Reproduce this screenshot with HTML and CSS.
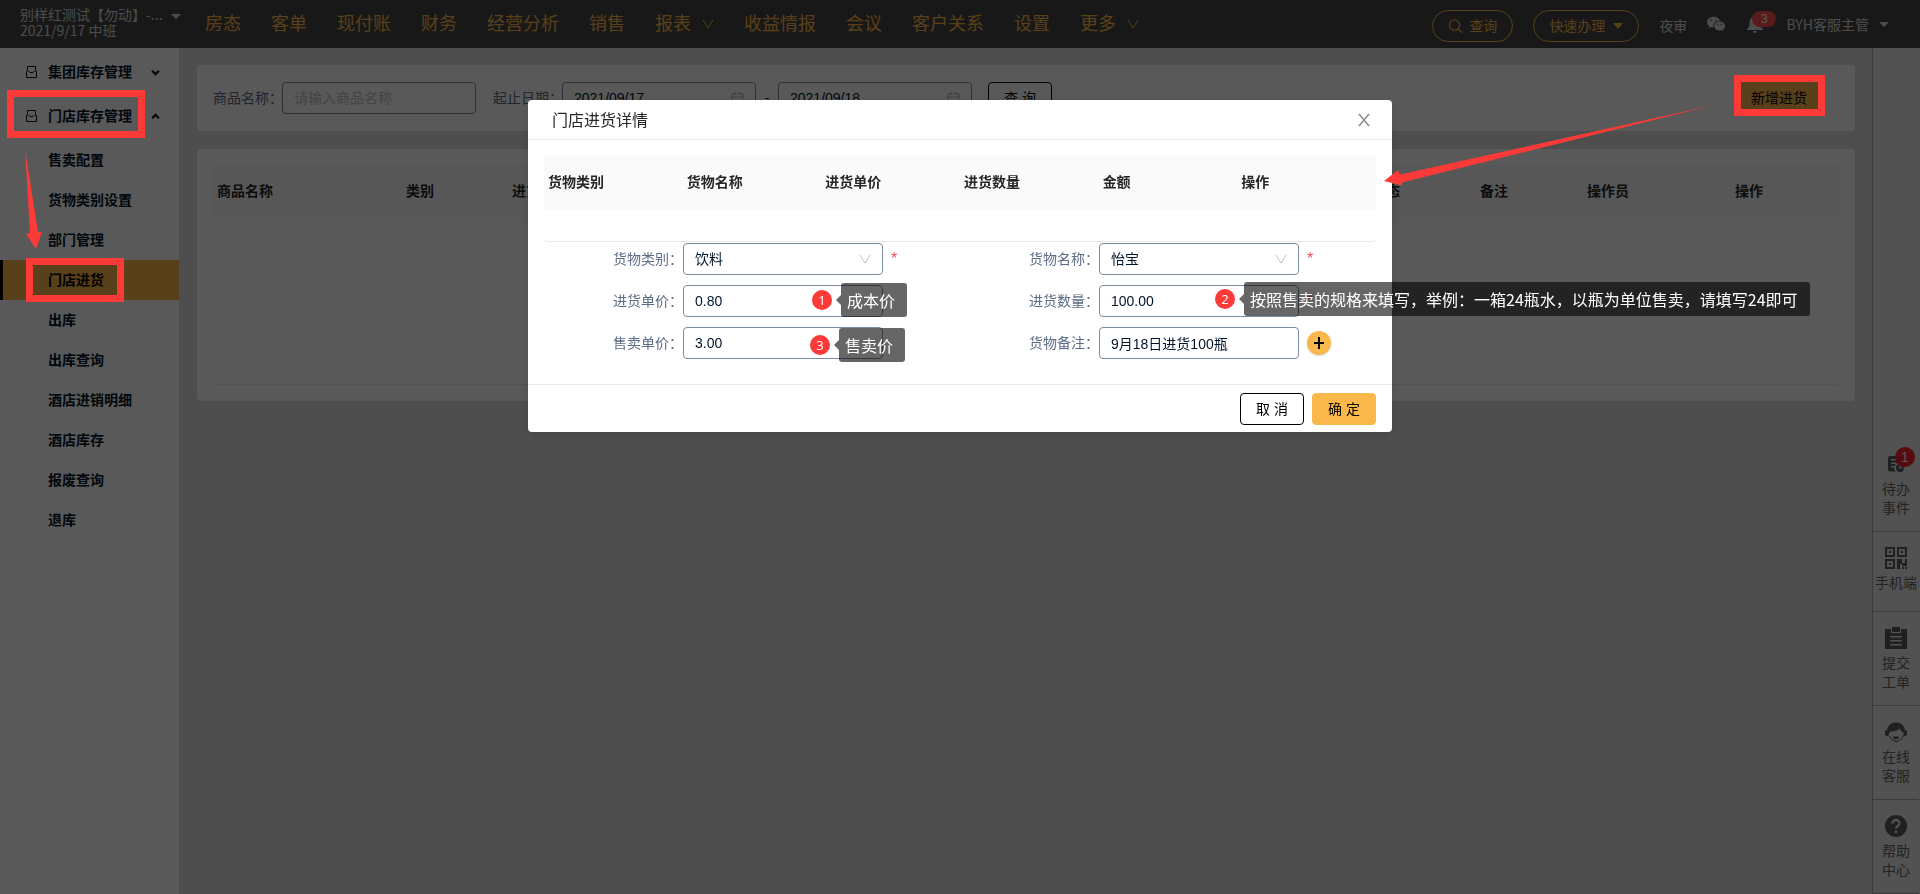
FILE: index.html
```html
<!DOCTYPE html>
<html lang="zh-CN">
<head>
<meta charset="utf-8">
<title>门店进货</title>
<link rel="stylesheet" href="styles.css">
</head>
<body>
<div class="app">
  <header class="topbar">
    <div class="hotel">
      <div class="hotel-text"><span>别样红测试【勿动】-...</span><span>2021/9/17 中班</span></div>
      <i class="caret"></i>
    </div>
    <nav class="nav">
      <a href="#">房态</a><a href="#">客单</a><a href="#">现付账</a><a href="#">财务</a><a href="#">经营分析</a><a href="#">销售</a>
      <a href="#">报表<svg class="nav-chev" viewBox="0 0 12 12"><path d="M1 2l5 8 5-8"/></svg></a>
      <a href="#">收益情报</a><a href="#">会议</a><a href="#">客户关系</a><a href="#">设置</a>
      <a href="#">更多<svg class="nav-chev" viewBox="0 0 12 12"><path d="M1 2l5 8 5-8"/></svg></a>
    </nav>
    <div class="tools">
      <button class="pill"><svg class="search" viewBox="0 0 16 16"><circle cx="7" cy="7" r="5.5"/><path d="M11 11l4 4"/></svg>查询</button>
      <button class="pill">快速办理<i class="caret gold"></i></button>
      <a class="audit" href="#">夜审</a>
      <svg class="wechat" viewBox="0 0 20 16"><path fill-rule="evenodd" d="M7.3 0C3.2 0 0 2.700 0 6c0 1.900 1 3.500 2.600 4.600L2 12.600l2.400-1.200c.8.2 1.800.4 2.800.4-.9-3.800 2.300-7.400 7-7.400C13.500 1.800 10.700 0 7.300 0zM4.900 4.800a.9.9 0 110-1.800.9.9 0 010 1.800zm4.900 0a.9.9 0 110-1.800.9.9 0 010 1.800z"/><path fill-rule="evenodd" d="M14 5.300c-3.300 0-6 2.200-6 5s2.700 5 6 5c.7 0 1.400-.1 2-.3l2 1-.5-1.700c1.500-.9 2.500-2.300 2.500-4 0-2.800-2.700-5-6-5zm-2 4a.8.8 0 110-1.600.8.8 0 010 1.600zm4 0a.8.8 0 110-1.600.8.8 0 010 1.600z"/></svg>
      <div class="bell-wrap">
        <svg class="bell" viewBox="0 0 16 18"><path d="M8 0a1.500 1.500 0 00-1.500 1.700C4 2.300 2.500 4.500 2.500 7v4.500L0 14v1h16v-1l-2.500-2.500V7c0-2.500-1.500-4.700-4-5.300A1.500 1.500 0 008 0zM6 16a2 2 0 004 0z"/></svg>
        <span class="bell-count">3</span>
      </div>
      <div class="user">BYH客服主管<i class="caret"></i></div>
    </div>
  </header>

  <div class="body">
    <aside class="side">
      <a class="group" href="#"><svg class="box-ico" viewBox="0 0 11 12"><path d="M.5 5.500v6h10v-6M1.500 5.500v-5h8v5M.5 5.500L2 4M10.500 5.500L9 4M2.500 5l1.500 1.500h3L8.500 5"/></svg><span>集团库存管理</span><svg class="side-chev" viewBox="0 0 8 8"><path d="M1 2.500l3 3 3-3"/></svg></a>
      <a class="group" href="#"><svg class="box-ico" viewBox="0 0 11 12"><path d="M.5 5.500v6h10v-6M1.500 5.500v-5h8v5M.5 5.500L2 4M10.500 5.500L9 4M2.500 5l1.500 1.500h3L8.500 5"/></svg><span>门店库存管理</span><svg class="side-chev" viewBox="0 0 8 8"><path d="M1 5.500l3-3 3 3"/></svg></a>
      <div class="subs">
        <a href="#">售卖配置</a><a href="#">货物类别设置</a><a href="#">部门管理</a><a href="#" class="active">门店进货</a><a href="#">出库</a><a href="#">出库查询</a><a href="#">酒店进销明细</a><a href="#">酒店库存</a><a href="#">报废查询</a><a href="#">退库</a>
      </div>
    </aside>

    <main class="main">
      <section class="panel filter">
        <label for="goods">商品名称：</label>
        <input id="goods" class="field" placeholder="请输入商品名称">
        <label class="next" for="from">起止日期：</label>
        <div class="date"><input id="from" class="field" value="2021/09/17"><svg viewBox="0 0 14 14"><path d="M1 2.500h12v10.500H1zM1 6h12M4 .5v3.500M10 .5v3.500"/></svg></div>
        <span class="dash">-</span>
        <div class="date"><input aria-label="结束日期" class="field" value="2021/09/18"><svg viewBox="0 0 14 14"><path d="M1 2.500h12v10.500H1zM1 6h12M4 .5v3.500M10 .5v3.500"/></svg></div>
        <button class="btn query">查 询</button>
        <button class="btn primary add">新增进货</button>
      </section>
      <section class="panel">
        <div class="table-box tall">
          <table class="grid stock">
            <thead><tr><th>商品名称</th><th>类别</th><th>进货单价</th><th>状态</th><th>备注</th><th>操作员</th><th>操作</th></tr></thead>
          </table>
        </div>
      </section>
    </main>

    <aside class="rail">
      <a href="#" class="todo"><span class="ico-wrap"><svg class="small" viewBox="0 0 16 16"><path fill-rule="evenodd" d="M2 0h9a2 2 0 012 2v5a5 5 0 00-5 8.500H2a2 2 0 01-2-2V2a2 2 0 012-2zm1 3v1.500h6V3zm0 3.500V8h5V6.500zM3 10v1.500h3V10z"/><path fill-rule="evenodd" d="M12 8a4 4 0 110 8 4 4 0 010-8zm-.7 1.500v3h3v-1.200h-1.800V9.500z"/></svg><span class="rail-count">1</span></span>待办<br>事件</a>
      <a href="#"><span class="ico-wrap"><svg viewBox="0 0 22 22"><path fill-rule="evenodd" d="M0 0h10v10H0zm2 2v6h6V2zM12 0h10v10H12zm2 2v6h6V2zM0 12h10v10H0zm2 2v6h6v-6zM4 4h2v2H4zM16 4h2v2h-2zM4 16h2v2H4zM12 12h5v4h3v-4h2v7h-5v-2h-2v5h-3zM17 20h2v2h-2zM20 20h2v2h-2z"/></svg></span>手机端</a>
      <a href="#"><span class="ico-wrap"><svg viewBox="0 0 22 22"><path fill-rule="evenodd" d="M0 2h6v4h10V2h6v20H0zm5 7v1.500h12V9zm0 4v1.500h12V13zm0 4v1.500h12V17zM7 0h8v5H7z"/></svg></span>提交<br>工单</a>
      <a href="#"><span class="ico-wrap"><svg viewBox="0 0 22 22"><path d="M11 1.500A8.500 8.500 0 002.500 9H2a2 2 0 00-2 2v2a2 2 0 002 2h1.500c0-2.500 1-4 2.500-4.500 3.500 0 7-1 9-3 .5 2 1.500 3 3.500 4V15H20a2 2 0 002-2v-2a2 2 0 00-2-2h-.5A8.500 8.500 0 0011 1.500z"/><path class="line" d="M2.500 8a9 9 0 0117 0M4.500 15a7 7 0 005.500 5M18.500 14.500a8 8 0 01-5.500 5.500M9 20.500h4"/><path d="M8 15.500h6a3 3 0 01-6 0z"/></svg></span>在线<br>客服</a>
      <a href="#"><span class="ico-wrap"><svg viewBox="0 0 22 22"><circle cx="11" cy="11" r="11"/><path class="mark" d="M7.500 8.500a3.500 3.500 0 117 0c0 2.500-3.500 2.500-3.500 5M11 15.500v2.500"/></svg></span>帮助<br>中心</a>
    </aside>
  </div>
</div>

<div class="mask">
  <div class="modal" role="dialog" aria-label="门店进货详情">
    <div class="modal-head"><h2>门店进货详情</h2><button class="close" aria-label="关闭"><svg viewBox="0 0 12 14"><path d="M1 1l10 12M11 1L1 13"/></svg></button></div>
    <div class="modal-body">
      <div class="table-box">
        <table class="grid">
          <thead><tr><th>货物类别</th><th>货物名称</th><th>进货单价</th><th>进货数量</th><th>金额</th><th>操作</th></tr></thead>
        </table>
      </div>
      <form class="form">
        <div class="row"><label for="cat">货物类别：</label><div class="select"><select id="cat" class="field"><option>饮料</option></select><svg viewBox="0 0 12 10"><path d="M1 1l5 8 5-8"/></svg></div><span class="star">*</span></div>
        <div class="row"><label for="name">货物名称：</label><div class="select"><select id="name" class="field"><option>怡宝</option></select><svg viewBox="0 0 12 10"><path d="M1 1l5 8 5-8"/></svg></div><span class="star">*</span></div>
        <div class="row"><label for="cost">进货单价：</label><input id="cost" class="field" value="0.80"></div>
        <div class="row"><label for="qty">进货数量：</label><input id="qty" class="field" value="100.00"><span class="star">*</span></div>
        <div class="row"><label for="price">售卖单价：</label><input id="price" class="field" value="3.00"></div>
        <div class="row"><label for="note">货物备注：</label><input id="note" class="field" value="9月18日进货100瓶"><button type="button" class="plus" aria-label="添加"><svg viewBox="0 0 10 12"><path d="M5 0v12M0 6h10"/></svg></button></div>
      </form>
    </div>
    <div class="modal-foot"><button class="btn">取 消</button><button class="btn primary">确 定</button></div>
  </div>
</div>

<div class="notes">
  <div class="frame frame-group"></div>
  <div class="frame frame-item"></div>
  <div class="frame frame-add"></div>
  <svg class="arrow arrow-down" viewBox="0 0 18 102"><path d="M1 0L14 83l4 0-6 17L2 85l4-1z"/></svg>
  <svg class="arrow arrow-left" viewBox="0 0 330 84"><path d="M330 2L18 79.500v3L0 78l14-11 2 4.500z"/></svg>
  <div class="note note-1"><b>1</b><span>成本价</span></div>
  <div class="note note-2"><b>2</b><span>按照售卖的规格来填写，举例：一箱24瓶水，以瓶为单位售卖，请填写24即可</span></div>
  <div class="note note-3"><b>3</b><span>售卖价</span></div>
</div>
</body>
</html>
```
FILE: styles.css
```css
* { box-sizing: border-box; }
body { margin: 0; font: 14px/20px "Liberation Sans", "Noto Sans CJK SC", sans-serif; color: #262626; background: #e0e0e0; overflow: hidden; }
a { color: inherit; text-decoration: none; }
button, input, select { font: inherit; color: inherit; }
svg { display: block; flex: none; }
.app { min-height: 100vh; display: flex; flex-direction: column; }

.topbar { height: 48px; background: #464646; display: flex; align-items: center; color: #d9d9d9; }
.hotel { width: 205px; padding: 0 0 4px 20px; display: flex; align-items: flex-start; gap: 6px; font-family: "Noto Sans CJK SC", sans-serif; line-height: 16px; white-space: nowrap; }
.hotel-text { display: flex; flex-direction: column; width: 145px; }
.caret { border: 5px solid transparent; border-top-color: currentColor; border-bottom: 0; flex: none; }
.hotel .caret { margin-top: 8px; }
.nav { display: flex; gap: 30px; flex: 1; font-size: 18px; line-height: 24px; color: #fbb84a; white-space: nowrap; }
.nav a { display: flex; align-items: center; }
.nav-chev { width: 12px; height: 12px; margin-left: 11px; fill: none; stroke: currentColor; }
.tools { display: flex; align-items: center; padding-right: 31px; white-space: nowrap; }
.pill { height: 32px; margin: 4px 20px 0 0; padding: 0 15px; border: 1px solid #fbb84a; border-radius: 16px; background: none; color: #fbb84a; display: flex; align-items: center; gap: 6px; }
.search { width: 15px; height: 16px; fill: none; stroke: currentColor; stroke-width: 1.3; }
.pill .gold { border-width: 6px 5px 0; margin-left: 2px; }
.audit { margin: 4px 20px 0 0; }
.wechat { width: 18px; height: 16px; fill: currentColor; margin-right: 22px; }
.bell-wrap { position: relative; width: 16px; margin-right: 23px; }
.bell { width: 16px; height: 18px; fill: currentColor; }
.bell-count { position: absolute; left: 5px; top: -4px; width: 24px; height: 16px; border-radius: 8px; background: #ff4d4f; color: #fff; font-size: 12px; line-height: 16px; text-align: center; }
.user { display: flex; align-items: center; gap: 10px; font-family: "Noto Sans CJK SC", sans-serif; }

.body { flex: 1; display: flex; }
.side { width: 179px; background: #fff; color: #001529; font-weight: 700; padding-top: 2px; }
.group { height: 44px; display: flex; align-items: center; padding-left: 26px; }
.box-ico { width: 11px; height: 12px; fill: none; stroke: currentColor; margin-right: 11px; }
.group span { width: 103px; }
.side-chev { width: 9px; height: 9px; fill: none; stroke: currentColor; stroke-width: 2; }
.subs { padding-top: 2px; }
.subs a { display: block; line-height: 40px; padding-left: 45px; border-left: 3px solid transparent; }
.subs .active { background: #fbb84a; border-color: #000; color: #000; }

.main { flex: 1; padding: 17px 17px 0 18px; display: flex; flex-direction: column; gap: 18px; }
.panel { background: #fff; border-radius: 4px; padding: 16px; }
.filter { display: flex; align-items: center; height: 66px; color: #5b6c84; white-space: nowrap; }
.filter label { width: 69px; }
.filter .next { margin-left: 17px; }
.field { width: 194px; height: 32px; border: 1px solid #7b8ba3; border-radius: 4px; background: #fff; color: #001529; padding: 0 11px; }
.field::placeholder { color: #bfbfbf; }
.date { position: relative; }
.date svg { position: absolute; right: 12px; top: 9px; width: 13px; height: 14px; fill: none; stroke: #aaa; }
.dash { width: 22px; text-align: center; color: #262626; }
.btn { height: 32px; width: 64px; padding: 0; border: 1px solid #000; border-radius: 4px; background: #fff; color: #000; text-align: center; }
.primary { background: #fbb84a; border-color: #fbb84a; }
.query { margin-left: 16px; }
.add { width: 88px; margin: 0 16px 0 auto; }
.table-box { height: 86px; border-bottom: 1px solid #e8e8e8; border-radius: 4px; }
.tall { height: 220px; }
.grid { width: 100%; border-spacing: 0; table-layout: fixed; }
.grid th { height: 53px; padding: 0 4px 1px; text-align: left; background: #fafafa; }
.stock th:nth-child(1) { width: 12%; }
.stock th { width: 7%; }
.stock th:nth-child(1) { width: 189px; }
.stock th:nth-child(2) { width: 106px; }
.stock th:nth-child(3) { width: auto; }
.stock th:nth-child(4) { width: 108px; }
.stock th:nth-child(5) { width: 107px; }
.stock th:nth-child(6) { width: 148px; }
.stock th:nth-child(7) { width: 108px; }

.rail { width: 48px; padding-right: 1px; border-left: 1px solid #aaa; background: #eaeaea; color: #666; display: flex; flex-direction: column; justify-content: flex-end; text-align: center; line-height: 19px; }
.rail a { height: 94px; padding-top: 15px; border-bottom: 1px solid #aaa; white-space: nowrap; }
.rail a:nth-child(2) { height: 80px; }
.ico-wrap { position: relative; display: flex; width: 22px; height: 22px; margin: 0 auto 5px; align-items: center; justify-content: center; }
.rail svg { width: 22px; height: 22px; fill: #5c5c5c; }
.rail .small { width: 16px; height: 16px; }
.rail .line { fill: none; stroke: #5c5c5c; }
.rail .mark { fill: none; stroke: #eaeaea; stroke-width: 2.4; }
.rail-count { position: absolute; left: 10px; top: -6px; width: 20px; height: 20px; border-radius: 10px; background: #f5222d; color: #fff; line-height: 20px; }

.mask { position: fixed; inset: 0; background: rgba(0, 0, 0, .65); padding-top: 100px; }
.modal { width: 45%; margin: 0 auto; background: #fff; border-radius: 4px; box-shadow: 0 4px 12px rgba(0, 0, 0, .15); }
.modal-head { display: flex; align-items: center; justify-content: space-between; height: 40px; padding: 0 22px 0 24px; border-bottom: 1px solid #e8e8e8; }
.modal-head h2 { margin: 0; padding-top: 2px; font-size: 16px; font-weight: 400; }
.close { border: 0; background: none; padding: 0; }
.close svg { width: 12px; height: 14px; fill: none; stroke: #8c8c8c; stroke-width: 1.5; }
.modal-body { padding: 16px 16px 25px; }
.form { display: grid; grid-template-columns: 1fr 1fr; row-gap: 10px; padding-top: 1px; }
.row { display: flex; align-items: center; height: 32px; }
.row label { width: 139px; text-align: right; color: #5b6c84; }
.row .field { width: 200px; }
.select { position: relative; }
.select select { appearance: none; display: block; }
.select svg { position: absolute; right: 12px; top: 11px; width: 12px; height: 10px; fill: none; stroke: #bfbfbf; }
.star { color: #ff4d4f; padding-left: 8px; font-size: 16px; }
.plus { width: 24px; height: 24px; margin-left: 8px; padding: 0; border: 0; border-radius: 12px; background: #fbb84a; display: flex; align-items: center; justify-content: center; box-shadow: 0 1px 2px rgba(0, 0, 0, .15); }
.plus svg { width: 10px; height: 12px; stroke: #000; stroke-width: 2; }
.modal-foot { border-top: 1px solid #e8e8e8; display: flex; justify-content: flex-end; gap: 8px; padding: 8px 16px 7px; }

.frame { position: absolute; border: 7px solid #fc3a38; }
.frame-group { left: 7px; top: 90px; width: 138px; height: 48px; }
.frame-item { left: 26px; top: 258px; width: 98px; height: 44px; }
.frame-add { left: 1734px; top: 75px; width: 91px; height: 41px; }
.arrow { position: absolute; fill: #fc3a38; overflow: visible; }
.arrow-down { left: 24px; top: 149px; width: 18px; height: 102px; }
.arrow-left { left: 1384px; top: 103px; width: 330px; height: 84px; }
.note { position: absolute; display: flex; align-items: center; gap: 9px; color: #fff; font-family: "Noto Sans CJK SC", sans-serif; white-space: nowrap; }
.note b { flex: none; width: 20px; height: 20px; border-radius: 10px; background: #fc3a38; font-family: "Open Sans", sans-serif; font-size: 13px; font-weight: 400; line-height: 20px; text-align: center; }
.note span { position: relative; font-size: 16px; line-height: 34px; padding: 0 12px 0 6px; border-radius: 3px; background: rgba(0, 0, 0, .6); }
.note span::before { content: ""; position: absolute; right: 100%; top: 12px; border: 5px solid transparent; border-left: 0; border-right-color: rgba(0, 0, 0, .6); }
.note-1 { left: 812px; top: 283px; }
.note-2 { left: 1215px; top: 282px; }
.note-3 { left: 810px; top: 328px; }
```
